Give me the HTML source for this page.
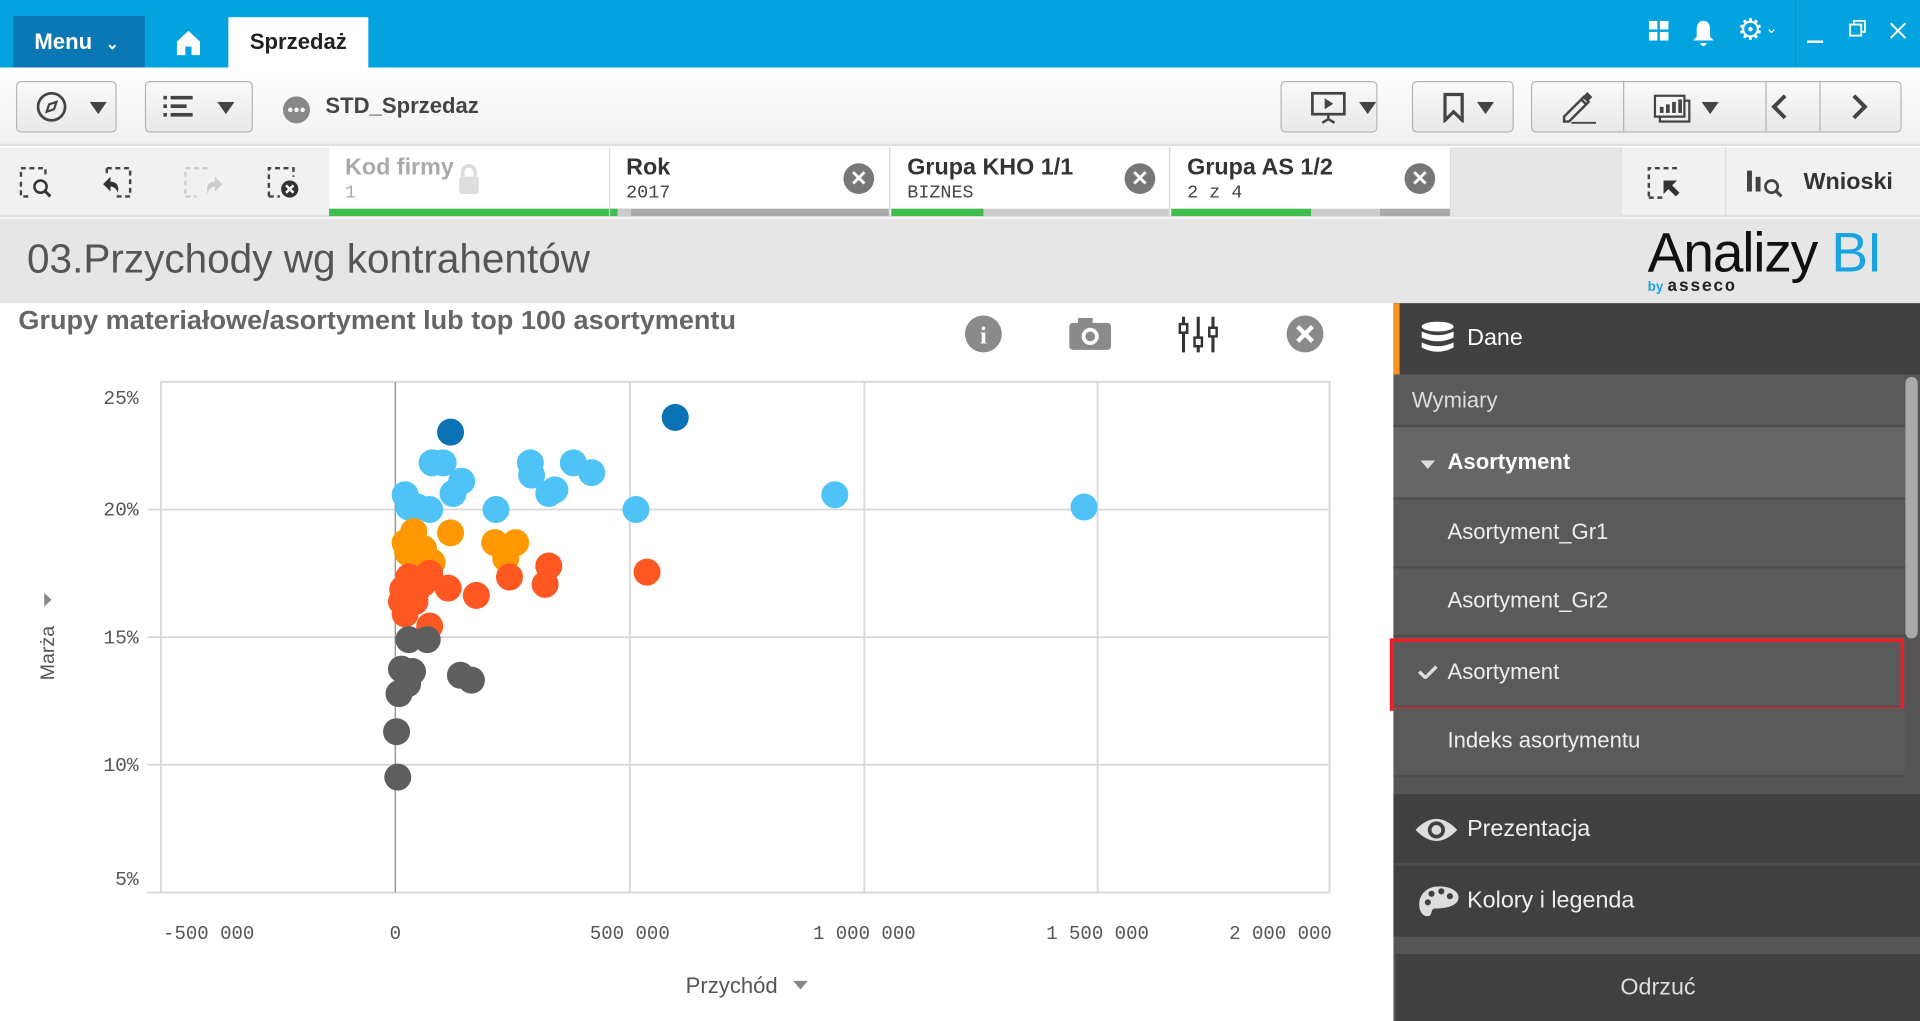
<!DOCTYPE html>
<html><head><meta charset="utf-8">
<style>
*{margin:0;padding:0;box-sizing:border-box}
html,body{width:1920px;height:1021px;overflow:hidden;background:#fff}
#w{position:absolute;left:0;top:0;width:1564px;height:832px;transform:scale(1.2277);transform-origin:0 0;font-family:"Liberation Sans Narrow","Liberation Sans",sans-serif;overflow:hidden}
.a{position:absolute}
.btn{position:absolute;border:1px solid #b5b5b5;border-radius:4px;background:linear-gradient(#fafafa,#e8e8e8)}
.flt{position:absolute;top:120px;height:56px;background:#fff;border-right:1px solid #ddd}
.flt .t{position:absolute;left:13px;top:6px;font-size:19px;font-weight:bold;color:#333}
.flt .v{position:absolute;left:13px;top:29px;font-size:15px;color:#444;font-family:"Liberation Mono",monospace}
.flt .bar{position:absolute;left:0;right:0;bottom:0;height:6px;background:#aaa}
.xc{position:absolute;top:13px;width:25px;height:25px;border-radius:50%;background:#777;color:#fff;font:bold 17px/25px "Liberation Sans",sans-serif;text-align:center}
.pi{position:absolute;left:1135px;width:417px;border-bottom:2px solid #4d4d4d;color:#eee;font-family:"Liberation Sans",sans-serif;font-size:18px}
</style></head><body><div id="w">
<!-- top bar -->
<div class="a" style="left:0;top:0;width:1564px;height:55px;background:#02a3df"></div>
<div class="a" style="left:11px;top:13px;width:107px;height:42px;background:#0a78b4;color:#fff;font:bold 18px/42px 'Liberation Sans',sans-serif;padding-left:17px">Menu <span style="font-size:13px;margin-left:6px">&#8964;</span></div>
<svg class="a" style="left:144px;top:25px" width="19" height="20" viewBox="0 0 19 20"><path d="M9.5 0L19 9V20H12V13H7V20H0V9Z" fill="#fff"/></svg>
<div class="a" style="left:186px;top:14px;width:114px;height:41px;background:#fff;color:#222;font:bold 18px/40px 'Liberation Sans',sans-serif;text-align:center">Sprzedaż</div>
<svg class="a" style="left:1343px;top:17px" width="17" height="17"><rect x="0" y="0" width="7" height="7" fill="#fff"/><rect x="9" y="0" width="7" height="7" fill="#fff"/><rect x="0" y="9" width="7" height="7" fill="#fff"/><rect x="9" y="9" width="7" height="7" fill="#fff"/></svg>
<svg class="a" style="left:1378px;top:16px" width="19" height="22" viewBox="0 0 19 22"><path d="M9.5 1C5 1 4 5 4 9V14L1 17H18L15 14V9C15 5 14 1 9.5 1Z M7 19H12A2.5 2.5 0 0 1 7 19Z" fill="#fff"/></svg>
<div class="a" style="left:1415px;top:10px;color:#fff;font:24px 'DejaVu Sans',sans-serif">⚙</div>
<div class="a" style="left:1438px;top:16px;color:#fff;font:12px 'DejaVu Sans',sans-serif">&#8964;</div>
<div class="a" style="left:1462px;top:0;width:1px;height:55px;background:#0a8fc4"></div>
<div class="a" style="left:1472px;top:33px;width:13px;height:2px;background:#fff"></div>
<svg class="a" style="left:1506px;top:16px" width="14" height="14"><rect x="1" y="4" width="9" height="9" fill="none" stroke="#fff" stroke-width="1.5"/><path d="M4 4V1H13V10H10" fill="none" stroke="#fff" stroke-width="1.5"/></svg>
<svg class="a" style="left:1539px;top:18px" width="14" height="14"><path d="M1 1L13 13M13 1L1 13" stroke="#fff" stroke-width="1.6"/></svg>
<!-- toolbar -->
<div class="a" style="left:0;top:55px;width:1564px;height:64px;background:linear-gradient(#fff,#f1f1f1);border-bottom:2px solid #e0e0e0"></div>
<div class="btn" style="left:13px;top:66px;width:82px;height:42px"></div>
<svg class="a" style="left:29px;top:74px" width="26" height="26"><circle cx="13" cy="13" r="11" fill="none" stroke="#444" stroke-width="2.2"/><path d="M17 9L11 11L9 17L15 15Z" fill="none" stroke="#444" stroke-width="1.8"/></svg>
<svg class="a" style="left:73px;top:83px" width="14" height="10"><path d="M0 0H14L7 10Z" fill="#444"/></svg>
<div class="btn" style="left:118px;top:66px;width:88px;height:42px"></div>
<svg class="a" style="left:133px;top:78px" width="24" height="18"><g fill="#444"><rect x="0" y="0" width="3" height="3"/><rect x="6" y="0" width="18" height="3"/><rect x="0" y="7" width="3" height="3"/><rect x="6" y="7" width="13" height="3"/><rect x="0" y="14" width="3" height="3"/><rect x="6" y="14" width="18" height="3"/></g></svg>
<svg class="a" style="left:177px;top:83px" width="14" height="10"><path d="M0 0H14L7 10Z" fill="#444"/></svg>
<svg class="a" style="left:230px;top:78px" width="23" height="23"><circle cx="11.5" cy="11.5" r="11" fill="#888"/><circle cx="6.5" cy="11.5" r="1.8" fill="#fff"/><circle cx="11.5" cy="11.5" r="1.8" fill="#fff"/><circle cx="16.5" cy="11.5" r="1.8" fill="#fff"/></svg>
<div class="a" style="left:265px;top:76px;font:bold 18px 'Liberation Sans Narrow','Liberation Sans',sans-serif;color:#444">STD_Sprzedaz</div>
<div class="btn" style="left:1043px;top:66px;width:79px;height:42px"></div>
<svg class="a" style="left:1067px;top:74px" width="30" height="28"><rect x="2" y="2" width="26" height="17" fill="none" stroke="#444" stroke-width="2.2"/><path d="M12 6L19 10.5L12 15Z" fill="#444"/><path d="M15 19V24M10 26L15 23L20 26" stroke="#444" stroke-width="2" fill="none"/></svg>
<svg class="a" style="left:1107px;top:83px" width="14" height="10"><path d="M0 0H14L7 10Z" fill="#444"/></svg>
<div class="btn" style="left:1150px;top:66px;width:83px;height:42px"></div>
<svg class="a" style="left:1175px;top:75px" width="18" height="25"><path d="M2 2H16V23L9 16L2 23Z" fill="none" stroke="#444" stroke-width="2.6"/></svg>
<svg class="a" style="left:1203px;top:83px" width="14" height="10"><path d="M0 0H14L7 10Z" fill="#444"/></svg>
<div class="btn" style="left:1247px;top:66px;width:302px;height:42px"></div>
<div class="a" style="left:1322px;top:67px;width:1px;height:40px;background:#b5b5b5"></div>
<div class="a" style="left:1438px;top:67px;width:1px;height:40px;background:#b5b5b5"></div>
<div class="a" style="left:1482px;top:67px;width:1px;height:40px;background:#b5b5b5"></div>
<svg class="a" style="left:1270px;top:73px" width="30" height="30"><path d="M4 22L20 6L24 10L8 26H4Z" fill="none" stroke="#444" stroke-width="2"/><path d="M18 8L22 12" stroke="#444" stroke-width="2"/><path d="M20 5L23 2L27 6L24 9Z" fill="#444"/><path d="M10 27H30" stroke="#444" stroke-width="1.5"/></svg>
<svg class="a" style="left:1346px;top:76px" width="32" height="26"><rect x="6" y="6" width="24" height="17" fill="none" stroke="#444" stroke-width="1.8"/><rect x="2" y="2" width="24" height="17" fill="#f4f4f4" stroke="#444" stroke-width="1.8"/><g fill="#444"><rect x="6" y="11" width="3" height="5"/><rect x="11" y="9" width="3" height="7"/><rect x="16" y="7" width="3" height="9"/><rect x="21" y="5" width="3" height="11"/></g></svg>
<svg class="a" style="left:1386px;top:83px" width="14" height="10"><path d="M0 0H14L7 10Z" fill="#444"/></svg>
<svg class="a" style="left:1442px;top:76px" width="14" height="22"><path d="M12 2L3 11L12 20" fill="none" stroke="#444" stroke-width="3.2"/></svg>
<svg class="a" style="left:1508px;top:76px" width="14" height="22"><path d="M2 2L11 11L2 20" fill="none" stroke="#444" stroke-width="3.2"/></svg>
<!-- selection bar -->
<div class="a" style="left:0;top:120px;width:1564px;height:57px;background:#f1f1f1;border-bottom:2px solid #e0e0e0"></div>
<svg class="a" style="left:16px;top:136px" width="120" height="30" viewBox="0 0 120 30">
<g fill="none" stroke="#444" stroke-width="2" stroke-dasharray="4 3"><path d="M1 8V1H21V6"/><path d="M1 12V24H8"/></g>
<circle cx="17" cy="16" r="5" fill="none" stroke="#333" stroke-width="2"/><path d="M20.5 19.5L25 24" stroke="#333" stroke-width="2.4"/>
<g fill="none" stroke="#444" stroke-width="2" stroke-dasharray="4 3"><path d="M71 1H90V24H76"/><path d="M71 1V5"/></g>
<path d="M68 14L74 8V12C80 12 81 16 80 21C79 18 77 16 74 16V20Z" fill="#333"/>
</svg>
<svg class="a" style="left:150px;top:136px" width="100" height="30">
<g fill="none" stroke="#ccc" stroke-width="2" stroke-dasharray="4 3"><path d="M1 22V1H20"/><path d="M1 24H10"/></g>
<path d="M31 14L25 8V12C19 12 18 16 19 22C20 18 22 16 25 16V20Z" fill="#ccc"/>
<g fill="none" stroke="#444" stroke-width="2" stroke-dasharray="4 3"><path d="M69 24V1H89V8"/><path d="M69 24H78"/></g>
<circle cx="86" cy="18" r="7" fill="#333"/><path d="M83 15L89 21M89 15L83 21" stroke="#fff" stroke-width="2"/>
</svg>
<div class="flt" style="left:268px;width:229px"><div class="t" style="color:#aaa">Kod firmy</div><div class="v" style="color:#aaa">1</div>
<svg class="a" style="left:104px;top:13px" width="20" height="26"><path d="M5 11V7A5 5 0 0 1 15 7V11" fill="none" stroke="#ddd" stroke-width="3"/><rect x="2" y="11" width="16" height="14" rx="2" fill="#ddd"/></svg>
<div class="bar" style="background:#3fbe4f"></div></div>
<div class="flt" style="left:497px;width:228px"><div class="t">Rok</div><div class="v">2017</div><div class="xc" style="left:190px">✕</div><div class="bar" style="background:#aaa;border-left:6px solid #3fbe4f"><div style="position:absolute;left:0;width:11px;height:6px;background:#ccc"></div></div></div>
<div class="flt" style="left:726px;width:227px"><div class="t">Grupa KHO 1/1</div><div class="v">BIZNES</div><div class="xc" style="left:190px">✕</div><div class="bar" style="background:#ccc"><div style="width:75px;height:6px;background:#3fbe4f"></div></div></div>
<div class="flt" style="left:954px;width:228px"><div class="t">Grupa AS 1/2</div><div class="v">2 z 4</div><div class="xc" style="left:190px">✕</div><div class="bar" style="background:linear-gradient(90deg,#3fbe4f 0,#3fbe4f 114px,#ccc 114px,#ccc 170px,#aaa 170px)"></div></div>
<div class="a" style="left:1182px;top:120px;width:138px;height:57px;background:#e6e6e6"></div>
<div class="a" style="left:1320px;top:120px;width:1px;height:57px;background:#ddd"></div>
<div class="a" style="left:1405px;top:120px;width:1px;height:57px;background:#ddd"></div>
<svg class="a" style="left:1342px;top:136px" width="28" height="28"><g fill="none" stroke="#444" stroke-width="2" stroke-dasharray="4 3"><path d="M1 24V1H24"/><path d="M1 25H12"/></g><path d="M13 11H24L20 15L26 21L23 24L17 18L13 22Z" fill="#333"/></svg>
<svg class="a" style="left:1422px;top:137px" width="32" height="26"><rect x="1" y="2" width="4" height="17" fill="#444"/><rect x="8" y="7" width="4" height="12" fill="#444"/><circle cx="21" cy="15" r="5" fill="none" stroke="#444" stroke-width="2.2"/><path d="M24.5 18.5L29 23" stroke="#444" stroke-width="2.6"/></svg>
<div class="a" style="left:1469px;top:138px;font:bold 19px 'Liberation Sans Narrow','Liberation Sans',sans-serif;color:#333">Wnioski</div>
<!-- title band -->
<div class="a" style="left:0;top:178px;width:1564px;height:69px;background:#e6e6e6"></div>
<div class="a" style="left:22px;top:192px;font:33px 'Liberation Sans Narrow','Liberation Sans',sans-serif;color:#555">03.Przychody wg kontrahentów</div>
<div class="a" style="left:1342px;top:180px;font:45px 'Liberation Sans',sans-serif;color:#111;letter-spacing:-1px">Analizy <span style="color:#19a3e0">BI</span></div>
<div class="a" style="left:1342px;top:226px;font:bold 11px 'Liberation Sans',sans-serif;color:#19a3e0">by <span style="color:#222;font:bold 14px 'Liberation Mono',monospace;letter-spacing:1px">asseco</span></div>
<!-- chart -->
<div class="a" style="left:15px;top:250px;font:bold 21px 'Liberation Sans Narrow','Liberation Sans',sans-serif;color:#666;white-space:nowrap;transform:scaleX(1.05);transform-origin:0 0">Grupy materiałowe/asortyment lub top 100 asortymentu</div>
<svg class="a" style="left:785px;top:256px" width="300" height="32">
<circle cx="16" cy="16" r="15" fill="#8a8a8a"/><text x="16" y="24" fill="#fff" font-family="Liberation Serif" font-weight="bold" font-size="20" text-anchor="middle">i</text>
<rect x="86" y="7" width="34" height="22" rx="3" fill="#8a8a8a"/><rect x="93" y="3" width="12" height="6" fill="#8a8a8a"/><circle cx="103" cy="18" r="7" fill="#fff"/><circle cx="103" cy="18" r="4" fill="#8a8a8a"/>
<g stroke="#333" stroke-width="2.5"><path d="M179 2V31M191 2V31M203 2V31"/></g><g fill="#fff" stroke="#333" stroke-width="2"><rect x="176" y="8" width="6" height="7"/><rect x="188" y="19" width="6" height="7"/><rect x="200" y="11" width="6" height="7"/></g>
<circle cx="278" cy="16" r="15" fill="#8a8a8a"/><path d="M272 10L284 22M284 10L272 22" stroke="#fff" stroke-width="3.5"/>
</svg>
<svg class="a" style="left:0;top:300px" width="1135" height="530" viewBox="0 300 1135 530">
<g stroke="#d8d8d8" stroke-width="1.5" fill="none">
<path d="M131 311H1083V727"/><path d="M120 415H1083M120 519H1083M120 623H1083M120 727H1083"/>
<path d="M131 311V727M513 311V727M704 311V727M894 311V727M1083 311V727"/>
</g>
<path d="M322 311V727" stroke="#999" stroke-width="1.2"/>
<g font-family="Liberation Mono,monospace" font-size="16" fill="#555" text-anchor="end">
<text x="113" y="329">25%</text><text x="113" y="420">20%</text><text x="113" y="524">15%</text><text x="113" y="628">10%</text><text x="113" y="721">5%</text></g>
<g font-family="Liberation Mono,monospace" font-size="15.5" fill="#555" text-anchor="middle">
<text x="170" y="765">-500 000</text><text x="322" y="765">0</text><text x="513" y="765">500 000</text><text x="704" y="765">1 000 000</text><text x="1043" y="765">2 000 000</text><text x="894" y="765">1 500 000</text></g>
<text x="596" y="809" font-family="Liberation Sans Narrow,Liberation Sans,sans-serif" font-size="18" fill="#555" text-anchor="middle">Przychód</text>
<path d="M646 799H658L652 806Z" fill="#888"/>
<text transform="translate(44,532) rotate(-90)" font-family="Liberation Sans,sans-serif" font-size="16" fill="#555" text-anchor="middle">Marża</text>
<path d="M36 483V494L42 488.5Z" fill="#888"/>
<g fill="#4fc3f7">
<circle cx="330" cy="403" r="11"/><circle cx="352" cy="377" r="11"/><circle cx="361" cy="377" r="11"/><circle cx="376" cy="392" r="11"/><circle cx="369" cy="402" r="11"/><circle cx="333" cy="413" r="11"/><circle cx="350" cy="415" r="11"/><circle cx="404" cy="415" r="11"/><circle cx="432" cy="377" r="11"/><circle cx="433" cy="387" r="11"/><circle cx="447" cy="402" r="11"/><circle cx="452" cy="399" r="11"/><circle cx="467" cy="377" r="11"/><circle cx="482" cy="385" r="11"/><circle cx="518" cy="415" r="11"/><circle cx="680" cy="403" r="11"/><circle cx="883" cy="413" r="11"/><circle cx="340" cy="413" r="11"/></g>
<g fill="#0b72b6"><circle cx="367" cy="352" r="11"/><circle cx="550" cy="340" r="11"/></g>
<g fill="#ff9800"><circle cx="330" cy="442" r="11"/><circle cx="337" cy="433" r="11"/><circle cx="345" cy="447" r="11"/><circle cx="352" cy="458" r="11"/><circle cx="367" cy="434" r="11"/><circle cx="403" cy="442" r="11"/><circle cx="420" cy="442" r="11"/><circle cx="412" cy="455" r="11"/><circle cx="340" cy="460" r="11"/><circle cx="332" cy="450" r="11"/></g>
<g fill="#ff5722"><circle cx="333" cy="470" r="11"/><circle cx="345" cy="475" r="11"/><circle cx="350" cy="467" r="11"/><circle cx="338" cy="490" r="11"/><circle cx="327" cy="490" r="11"/><circle cx="365" cy="479" r="11"/><circle cx="388" cy="485" r="11"/><circle cx="415" cy="470" r="11"/><circle cx="447" cy="461" r="11"/><circle cx="444" cy="476" r="11"/><circle cx="527" cy="466" r="11"/><circle cx="350" cy="510" r="11"/><circle cx="330" cy="500" r="11"/><circle cx="340" cy="480" r="11"/><circle cx="328" cy="480" r="11"/></g>
<g fill="#5e5e5e"><circle cx="333" cy="521" r="11"/><circle cx="348" cy="521" r="11"/><circle cx="327" cy="545" r="11"/><circle cx="336" cy="547" r="11"/><circle cx="332" cy="557" r="11"/><circle cx="325" cy="565" r="11"/><circle cx="375" cy="550" r="11"/><circle cx="384" cy="554" r="11"/><circle cx="323" cy="596" r="11"/><circle cx="324" cy="633" r="11"/></g>
</svg>
<!-- right panel -->
<div class="a" style="left:1135px;top:247px;width:429px;height:585px;background:#555"></div>
<div class="a" style="left:1135px;top:247px;width:429px;height:58px;background:#404040;border-left:5px solid #f7941d"></div>
<svg class="a" style="left:1157px;top:262px" width="28" height="26"><g fill="#fff"><ellipse cx="14" cy="4" rx="13" ry="4"/><path d="M1 8Q14 14 27 8V13Q14 19 1 13Z"/><path d="M1 17Q14 23 27 17V21Q14 28 1 21Z"/></g></svg>
<div class="a" style="left:1195px;top:265px;font:19px 'Liberation Sans',sans-serif;color:#fff">Dane</div>
<div class="pi" style="top:305px;height:43px;background:#5a5a5a;color:#ddd;padding:11px 0 0 15px">Wymiary</div>
<div class="pi" style="top:348px;height:59px;background:#666;color:#fff;font-weight:bold;padding:18px 0 0 44px">Asortyment</div>
<svg class="a" style="left:1157px;top:375px" width="12" height="8"><path d="M0 0H12L6 7Z" fill="#ddd"/></svg>
<div class="pi" style="top:407px;height:56px;background:#5a5a5a;padding:16px 0 0 44px">Asortyment_Gr1</div>
<div class="pi" style="top:463px;height:56px;background:#5a5a5a;padding:16px 0 0 44px">Asortyment_Gr2</div>
<div class="pi" style="top:519px;height:58px;background:#5a5a5a;padding:18px 0 0 44px">Asortyment</div>
<svg class="a" style="left:1155px;top:541px" width="16" height="12"><path d="M1 6L6 11L15 2" fill="none" stroke="#ddd" stroke-width="2.8"/></svg>
<div class="a" style="left:1132px;top:520px;width:419px;height:59px;border:3px solid #e8202a"></div>
<div class="pi" style="top:577px;height:56px;background:#5a5a5a;padding:16px 0 0 44px">Indeks asortymentu</div>
<div class="a" style="left:1552px;top:307px;width:10px;height:213px;background:#aaa;border-radius:5px"></div>
<div class="a" style="left:1135px;top:647px;width:429px;height:58px;background:#404040;border-bottom:2px solid #4d4d4d"></div>
<svg class="a" style="left:1152px;top:664px" width="36" height="24"><path d="M1 12Q18 -6 35 12Q18 30 1 12Z" fill="#ddd"/><circle cx="18" cy="12" r="7" fill="#404040"/><circle cx="18" cy="12" r="4" fill="#ddd"/></svg>
<div class="a" style="left:1195px;top:665px;font:19px 'Liberation Sans',sans-serif;color:#eee">Prezentacja</div>
<div class="a" style="left:1135px;top:705px;width:429px;height:58px;background:#404040"></div>
<svg class="a" style="left:1155px;top:720px" width="34" height="28"><path d="M17 2C7 2 1 9 1 16C1 25 6 27 9 26C12 25 10 20 14 20C22 20 33 18 33 11C33 5 25 2 17 2Z" fill="#ddd"/><g fill="#404040"><circle cx="8" cy="15" r="2.5"/><circle cx="11" cy="8" r="2.5"/><circle cx="19" cy="6" r="2.5"/><circle cx="26" cy="10" r="2.5"/></g></svg>
<div class="a" style="left:1195px;top:723px;font:19px 'Liberation Sans',sans-serif;color:#eee">Kolory i legenda</div>
<div class="a" style="left:1137px;top:777px;width:427px;height:55px;background:#404040;color:#ddd;font:19px/55px 'Liberation Sans',sans-serif;text-align:center">Odrzuć</div>
</div></body></html>
